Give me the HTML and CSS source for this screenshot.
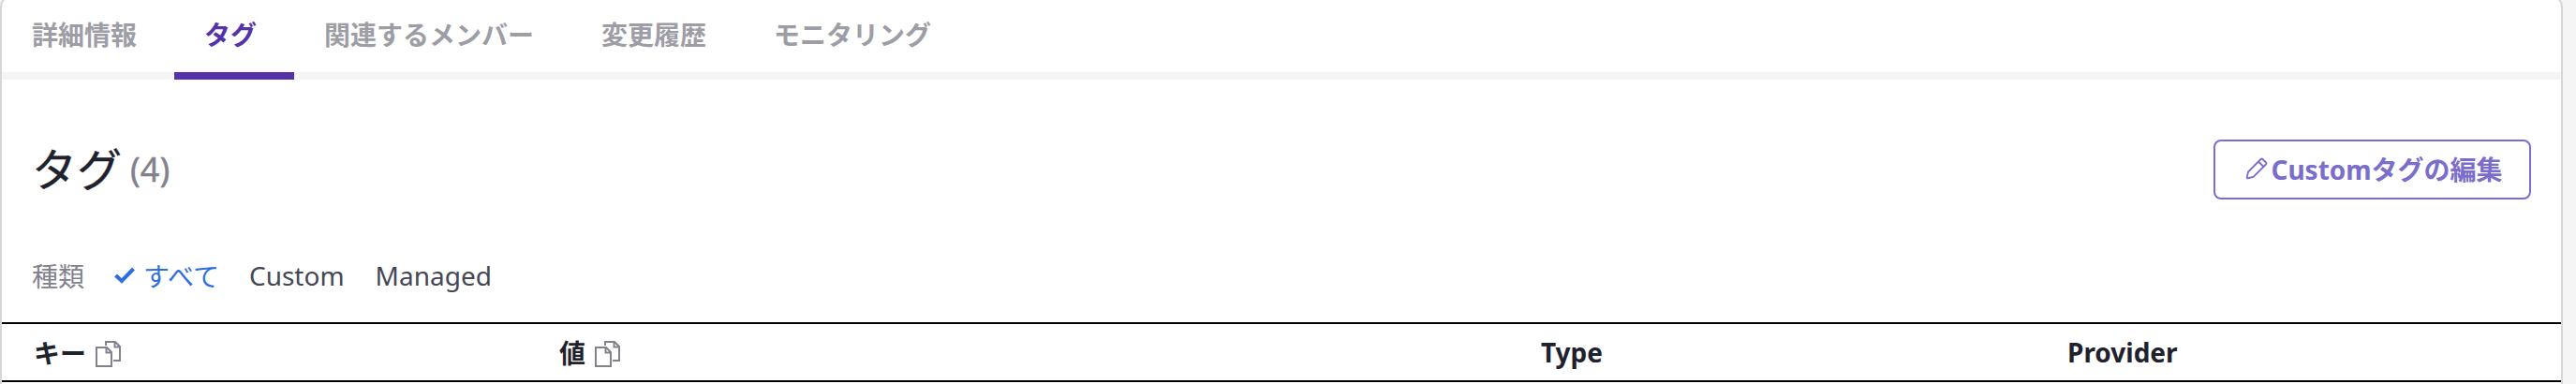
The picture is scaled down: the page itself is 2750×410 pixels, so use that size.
FILE: index.html
```html
<!DOCTYPE html>
<html lang="ja">
<head>
<meta charset="utf-8">
<title>タグ</title>
<link rel="stylesheet" href="styles.css">
</head>
<body>
<svg class="defs" width="0" height="0">
  <symbol id="copy" viewBox="0 0 28 30">
    <path d="M1 8H12L17 13V28H1ZM11.500 8V13.500H17M11 6V2H21L26 7V22H19M20.500 2V7.500H26"/>
  </symbol>
</svg>
<main class="panel">
  <nav class="tabs">
    <a class="tab">詳細情報</a>
    <a class="tab active">タグ</a>
    <a class="tab">関連するメンバー</a>
    <a class="tab">変更履歴</a>
    <a class="tab">モニタリング</a>
  </nav>
  <header class="head">
    <h1 class="title">タグ<span class="count">(4)</span></h1>
    <button class="edit">
      <svg class="pencil" viewBox="0 0 24 24"><path d="M1.500 22.500L3 15.500L16.500 2Q17.500 1 18.500 2L22 5.500Q23 6.500 22 7.500L8.500 21L1.500 22.500M14 4.500L19.500 10"/></svg>
      <span>Customタグの編集</span>
    </button>
  </header>
  <div class="filters">
    <span class="filter-label">種類</span>
    <svg class="check" viewBox="0 0 22 18"><path d="M1.500 9L8 15L20.500 2"/></svg>
    <span class="filter selected">すべて</span>
    <span class="filter custom">Custom</span>
    <span class="filter managed">Managed</span>
  </div>
  <div class="table-head">
    <div class="cell">キー<svg class="copy"><use href="#copy"/></svg></div>
    <div class="cell">値<svg class="copy"><use href="#copy"/></svg></div>
    <div class="cell">Type</div>
    <div class="cell">Provider</div>
  </div>
</main>
</body>
</html>
```
FILE: styles.css
```css
* { box-sizing: border-box; }
body {
  margin: 0;
  height: 410px;
  overflow: hidden;
  background: #f5f5f5;
  font-family: "Noto Sans", "Noto Sans CJK JP", sans-serif;
  font-size: 28px;
  color: #1f222d;
}
.defs { display: block; }
.panel {
  width: 2736px;
  height: 415px;
  margin-top: -5px;
  padding-top: 5px;
  background: #fff;
  border: 2px solid #d7d7d7;
  border-bottom: 0;
  border-radius: 12px 12px 0 0;
}
.tabs {
  display: flex;
  height: 83px;
  border-bottom: 8px solid #f5f5f5;
}
.tab {
  height: 83px;
  padding: 0 40px 0 32px;
  line-height: 71px;
  font-weight: 700;
  color: #9d9da6;
  border-bottom: 8px solid transparent;
}
.active { color: #5432a8; border-bottom-color: #5432a8; }
.head {
  display: flex;
  justify-content: space-between;
  align-items: center;
  height: 64px;
  margin-top: 64px;
  padding: 0 32px;
}
.title {
  display: flex;
  align-items: center;
  margin: 0;
  font-size: 48px;
  font-weight: 400;
  line-height: 64px;
  -webkit-text-stroke: 0.4px currentColor;
}
.count { margin-left: 9px; font-size: 36px; color: #82818d; }
.edit {
  display: flex;
  align-items: center;
  justify-content: center;
  gap: 3px;
  width: 339px;
  height: 64px;
  padding: 0 0 2px 4px;
  background: #fff;
  border: 2px solid #7b6dcb;
  border-radius: 8px;
  font: inherit;
  font-weight: 700;
  color: #7b6dcb;
}
svg { fill: none; stroke: currentColor; }
.pencil { width: 24px; height: 24px; stroke-width: 1.800; }
.filters {
  display: flex;
  align-items: center;
  height: 40px;
  margin-top: 61px;
  padding-left: 32px;
  color: #454656;
}
.filter-label { color: #82818d; }
.check { width: 22px; height: 18px; margin: 0 9px 0 32px; color: #2d6fe0; stroke-width: 4; }
.selected { color: #2d6fe0; }
.custom { margin-left: 32px; }
.managed { margin-left: 33px; }
.table-head {
  display: grid;
  grid-template-columns: 561px 1048px 562px 1fr;
  height: 64px;
  margin-top: 30px;
  border-top: 2px solid #000;
  border-bottom: 2px solid #000;
}
.cell { display: flex; align-items: center; padding-left: 34px; font-weight: 700; }
.copy { width: 28px; height: 30px; margin: 4px 0 0 10px; color: #82818d; stroke-width: 2; }
```
